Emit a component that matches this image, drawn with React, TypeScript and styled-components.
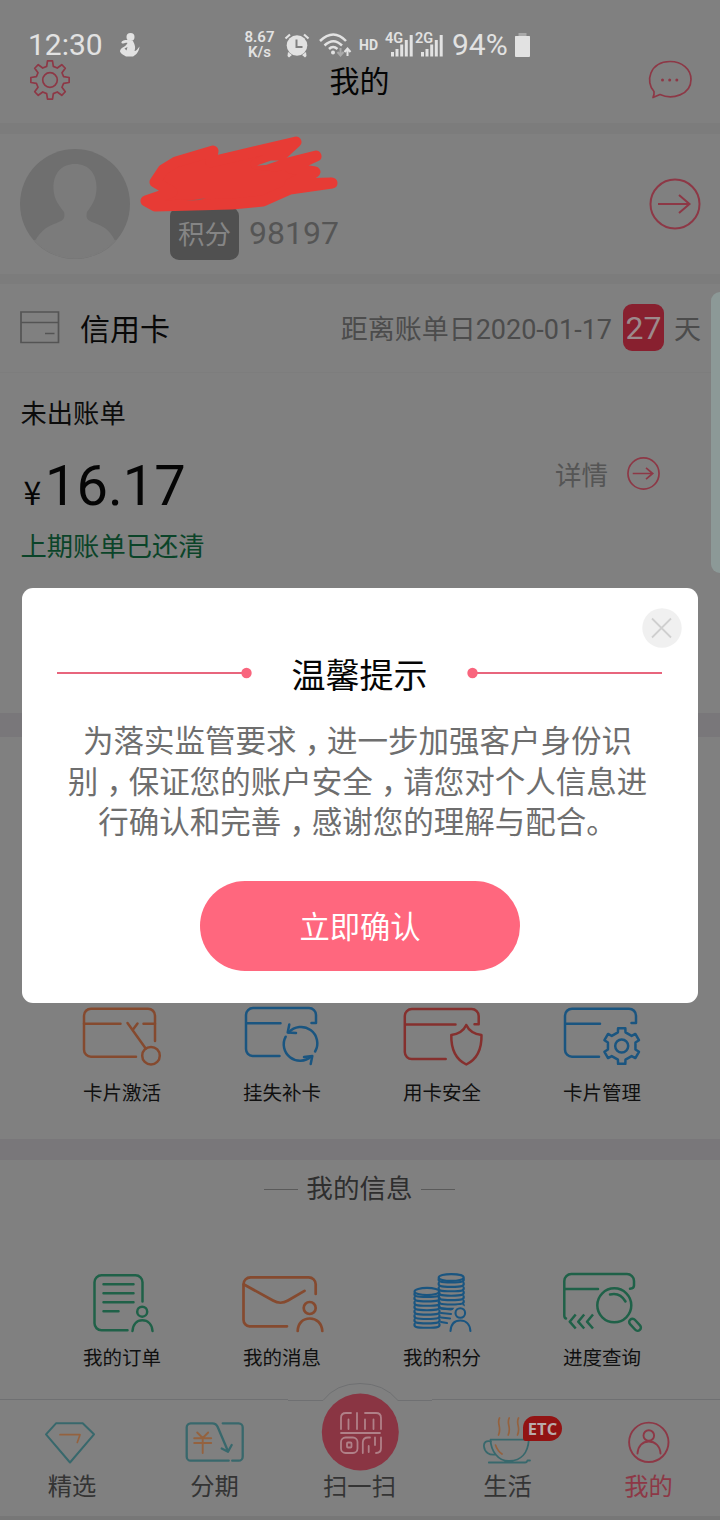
import React from "react";
import styled, { createGlobalStyle } from "styled-components";

const c = {
  page: "#808080",
  band: "#7c7c7c",
  pink: "#8d3846",
  orange: "#854a2f",
  blue: "#1a5580",
  red: "#85302e",
  green: "#1f6148",
  teal: "#38686c",
  amber: "#94623f",
  light: "#e2e2e2",
};

const GlobalStyle = createGlobalStyle`
  * { box-sizing: border-box; }
  body {
    margin: 0;
    background: ${c.page};
    font-family: Roboto, "Noto Sans CJK SC", sans-serif;
  }
  svg { display: block; flex: none; }
`;

const Page = styled.div`
  position: relative;
  display: flex;
  flex-direction: column;
  width: 720px;
  height: 1520px;
  overflow: hidden;
  background: ${c.page};
  white-space: nowrap;
`;

/* ---------- status bar ---------- */

const StatusBar = styled.div`
  display: flex;
  align-items: center;
  height: 60px;
  padding: 30px 0 0 27px;
  color: ${c.light};
`;

const Clock = styled.span`
  width: 92px;
  padding-left: 1px;
  font-size: 30px;
  line-height: 30px;
`;

const StatusRight = styled.div`
  display: flex;
  align-items: center;
  margin-left: 104px;
`;

const NetSpeed = styled.div`
  width: 31px;
  margin: -1px 9px 0 0;
  font-size: 15px;
  font-weight: 600;
  line-height: 14.5px;
  text-align: center;
`;

const HdMark = styled.span`
  width: 26px;
  margin-left: 7px;
  font-size: 14px;
  font-weight: 700;
  line-height: 26px;
`;

const SignalBox = styled.div`
  position: relative;
  width: 30px;
  height: 26px;
`;

const SignalLabel = styled.span`
  position: absolute;
  left: 0;
  top: 0;
  font-size: 14.5px;
  font-weight: 600;
  line-height: 14px;
`;

const Percent = styled.span`
  width: 62px;
  margin-left: 7px;
  font-size: 30px;
  line-height: 30px;
`;

/* ---------- header ---------- */

const Header = styled.header`
  display: flex;
  justify-content: space-between;
  align-items: flex-start;
  height: 63px;
  padding: 0 28px 0 29px;
`;

const Title = styled.h1`
  margin: 0;
  font-size: 30px;
  font-weight: 400;
  line-height: 44px;
  color: #050505;
`;

const Band = styled.div<{ $h: number; $tint?: string }>`
  flex: none;
  height: ${(p) => p.$h}px;
  background: ${(p) => p.$tint ?? c.band};
`;

/* ---------- profile ---------- */

const Profile = styled.section`
  position: relative;
  display: flex;
  align-items: center;
  height: 140px;
  padding: 0 19px 0 20px;
`;

const Points = styled.div`
  display: flex;
  align-items: center;
  flex: 1;
  margin: 58px 0 0 40px;
`;

const PointsTag = styled.span`
  width: 69px;
  height: 53px;
  border-radius: 9px;
  background: #505050;
  color: #858585;
  font-size: 26.5px;
  line-height: 55px;
  text-align: center;
`;

const PointsValue = styled.span`
  margin-left: 10px;
  font-size: 32px;
  line-height: 48px;
  color: #555;
`;

const Scribble = styled.svg`
  position: absolute;
  left: 138px;
  top: 0;
`;

/* ---------- credit card ---------- */

const CardHead = styled.div`
  display: flex;
  align-items: center;
  height: 89px;
  padding: 0 20px;
  border-bottom: 1px solid #7d7d7d;
`;

const CardName = styled.span`
  flex: 1;
  margin-left: 20px;
  padding-top: 3px;
  font-size: 30px;
  line-height: 40px;
  color: #080808;
`;

const DueText = styled.span`
  padding-top: 4px;
  font-size: 27px;
  line-height: 40px;
  color: #4c4c4c;
`;

const DayBadge = styled.span`
  width: 41px;
  height: 47px;
  margin: -1px 10px 0 11px;
  border-radius: 9px;
  background: #88202f;
  color: #9c8a8c;
  font-size: 32px;
  line-height: 49px;
  text-align: center;
`;

const Due = styled.div`
  display: flex;
  align-items: center;
  margin-right: -1px;
`;

const Bill = styled.section`
  display: flex;
  justify-content: space-between;
  height: 340px;
  padding: 21px 60px 0 20.5px;
`;

const BillText = styled.p<{ $paid?: boolean }>`
  margin: 0;
  font-size: 26.3px;
  line-height: 40px;
  color: ${(p) => (p.$paid ? "#0b4429" : "#0c0c0c")};
`;

const Amount = styled.div`
  display: flex;
  align-items: baseline;
  height: 93px;
  line-height: 105px;
  color: #050505;
  font-size: 56px;
`;

const Yen = styled.span`
  width: 24.5px;
  padding-left: 3px;
  font-family: "Noto Sans CJK SC", sans-serif;
  font-size: 32px;
`;

const Detail = styled.div`
  display: flex;
  align-items: center;
  gap: 19px;
  height: 40px;
  margin-top: 59px;
  color: #555;
  font-size: 26.5px;
`;

/* ---------- shortcut grids ---------- */

const Shortcuts = styled.section<{ $h: number; $top: number }>`
  display: grid;
  grid-template-columns: repeat(4, 160px);
  align-content: start;
  height: ${(p) => p.$h}px;
  padding: ${(p) => p.$top}px 0 0 42px;
`;

const Shortcut = styled.div`
  display: flex;
  flex-direction: column;
  align-items: center;
  font-size: 19.5px;
  line-height: 28px;
  color: #101010;
`;

const ShortcutLabel = styled.span`
  margin-top: 11px;
`;

const SectionTitle = styled.div`
  display: flex;
  align-items: center;
  justify-content: center;
  gap: 8px;
  height: 57px;
  padding: 0 1px 4px 0;
  color: #2e2e2e;
  font-size: 26.6px;
`;

const Rule = styled.i`
  width: 34px;
  height: 1px;
  margin-top: 5px;
  background: #5a5a5a;
`;

/* ---------- tab bar ---------- */

const TabBar = styled.nav`
  position: relative;
  display: grid;
  grid-template-columns: 144px 141px 149px 147px 135px;
  height: 117px;
  border-top: 1px solid #6f7072;
`;

const Tab = styled.div<{ $active?: boolean }>`
  position: relative;
  display: flex;
  flex-direction: column;
  align-items: center;
  padding-top: 15px;
  font-size: 24.3px;
  line-height: 36px;
  color: ${(p) => (p.$active ? "#8d3846" : "#343434")};
`;

const TabLabel = styled.span`
  margin-top: 2px;
`;

const ScanTab = styled(Tab)`
  padding-top: 0;
  margin-top: -18px;
`;

const ScanLabel = styled.span`
  margin-top: -3px;
`;

const EtcBadge = styled.span`
  position: absolute;
  left: 89px;
  top: 16px;
  width: 39px;
  height: 25px;
  border-radius: 12px 13px 13px 3px;
  background: #921313;
  color: #b9aaaa;
  font-family: "Open Sans", sans-serif;
  font-size: 16.5px;
  font-weight: 700;
  line-height: 26px;
  text-align: center;
`;

/* ---------- overlays ---------- */

const EdgeHandle = styled.div`
  position: absolute;
  right: 0;
  top: 292px;
  width: 9px;
  height: 281px;
  border-radius: 9px 0 0 9px;
  background: #8c9997;
`;

const Overlay = styled.div`
  position: absolute;
  inset: 0;
  padding: 588px 22px 0;
`;

const Dialog = styled.div`
  position: relative;
  display: flex;
  flex-direction: column;
  align-items: center;
  height: 415px;
  padding: 61px 1px 0 0;
  border-radius: 11px;
  background: #fff;
`;

const Close = styled.svg`
  position: absolute;
  right: 16px;
  top: 20px;
`;

const DialogHead = styled.div`
  display: flex;
  align-items: center;
  justify-content: space-between;
  width: 605px;
  height: 48px;
`;

const DialogTitle = styled.h2`
  margin: 5px 0 0;
  font-size: 34px;
  font-weight: 400;
  line-height: 48px;
  color: #050505;
`;

const Message = styled.div`
  margin-top: 25px;
  padding-right: 4px;
  font-size: 30.5px;
  line-height: 40.5px;
  color: #6e6e6e;
  text-align: center;
`;

const Comma = styled.span`
  display: inline-block;
  width: 1em;
  padding-left: 0.27em;
  text-align: left;
  font-feature-settings: "halt";
`;

const Confirm = styled.button`
  width: 320px;
  height: 90px;
  margin-top: 37px;
  padding: 3px 0 0 1px;
  border: 0;
  border-radius: 45px;
  background: #ff677e;
  color: #fff;
  font-family: inherit;
  font-size: 30.3px;
  line-height: 87px;
`;

/* ---------- drawings ---------- */

function gearPath(cx: number, cy: number, teeth: number, ro: number, ri: number, tip: number, root: number) {
  const pt = (r: number, a: number) =>
    `${(cx + r * Math.sin(a)).toFixed(2)} ${(cy - r * Math.cos(a)).toFixed(2)}`;
  const parts: string[] = [];
  for (let i = 0; i < teeth; i++) {
    const a = (i * 2 * Math.PI) / teeth;
    parts.push(`${i ? "L" : "M"}${pt(ri, a - root)}`, `L${pt(ro, a - tip)}`, `L${pt(ro, a + tip)}`, `L${pt(ri, a + root)}`);
  }
  return parts.join("") + "Z";
}

const Icon = ({ color, w = 90, h = 66, sw = 2.5, children }: {
  color: string; w?: number; h?: number; sw?: number; children: React.ReactNode;
}) => (
  <svg width={w} height={h} viewBox={`0 0 ${w} ${h}`} fill="none" stroke={color} strokeWidth={sw} strokeLinecap="round" strokeLinejoin="round">
    {children}
  </svg>
);

const ArrowCircle = ({ size, sw }: { size: number; sw: number }) => (
  <svg width={size} height={size} viewBox="0 0 52 52" fill="none" stroke={c.pink} strokeWidth={sw}>
    <circle cx="26" cy="26" r="24.5" />
    <path d="M9 26H40M30 17L40.500 26L30 35" />
  </svg>
);

const Signal = ({ label }: { label: string }) => (
  <SignalBox>
    <svg width="30" height="26" viewBox="0 0 30 26" fill={c.light}>
      <path d="M6 20h3v4.500h-3zM10.500 17h3v7.500h-3zM15.200 12.500h3v12h-3zM19.800 8h3v16.500h-3zM24.700 3h3v21.500h-3z" />
    </svg>
    <SignalLabel>{label}</SignalLabel>
  </SignalBox>
);

const coinLayers = (x1: number, x2: number, y: number, n: number, step: number) =>
  Array.from({ length: n }, (_, i) => {
    const yy = y + i * step;
    return `M${x1} ${yy}c-1 3 1 4 ${(x2 - x1) / 2} 4s${(x2 - x1) / 2 + 1}-1 ${(x2 - x1) / 2}-4`;
  }).join("");

const services = [
  {
    label: "卡片激活",
    icon: (
      <Icon color={c.orange}>
        <path d="M59 53.700H14a7 7 0 0 1-7-7V12.700a7 7 0 0 1 7-7H71a7 7 0 0 1 7 7V38" />
        <path d="M7 20.700H43.500M66.500 20.700H78M50.500 20L68.700 45.500M56 26.500L60.500 20.500" />
        <circle cx="74" cy="52.700" r="8.800" />
      </Icon>
    ),
  },
  {
    label: "挂失补卡",
    icon: (
      <Icon color={c.blue}>
        <path d="M42.500 53H15.500a7 7 0 0 1-6.500-7V12a7 7 0 0 1 7-7H72a7 7 0 0 1 7 7V20H74.500M9 20.300H43.500" />
        <path d="M51.800 29.500A16.300 16.300 0 0 1 78.100 48.500M48.700 33.700A16.300 16.300 0 0 0 74 53.500" />
        <path d="M52.300 21.500L50.700 29.500L59 30M67 54L75.300 53L73.700 61" />
      </Icon>
    ),
  },
  {
    label: "用卡安全",
    icon: (
      <Icon color={c.red}>
        <path d="M48.700 56H15a7 7 0 0 1-7.200-7V13a7 7 0 0 1 7-7H74.700a7 7 0 0 1 7 7V21.300H77.500M7.700 21.500H58.500" />
        <path d="M69.300 22C66.500 28 62 31 54.300 32C54 46 58 56 69.300 61.500C80.500 56 84.800 46 84.500 32C77 31 72 28 69.300 22Z" />
      </Icon>
    ),
  },
  {
    label: "卡片管理",
    icon: (
      <Icon color={c.blue}>
        <path d="M42 53.700H15a7 7 0 0 1-7-7V12.700a7 7 0 0 1 7-7H72a7 7 0 0 1 7 7V20H74.500M8 20.700H43" />
        <path d={gearPath(64.7, 43, 6, 18.2, 14.2, 0.2, 0.27)} />
        <circle cx="64.700" cy="43" r="6.500" />
      </Icon>
    ),
  },
];

const infos = [
  {
    label: "我的订单",
    icon: (
      <Icon color={c.green}>
        <path d="M50.500 62.300H24.500a7 7 0 0 1-7-7V14.300a7 7 0 0 1 7-7H58.500a7 7 0 0 1 7 7V33.500" />
        <path d="M26.500 16.300H56.500M26.500 25.300H56.500M26.500 34.300H56.500M26.500 43.200H41.500" />
        <circle cx="65.200" cy="43.700" r="5" />
        <path d="M55.500 63C56 56 60 52.300 65.300 52.300S75 56 75.500 63" />
      </Icon>
    ),
  },
  {
    label: "我的消息",
    icon: (
      <Icon color={c.orange} sw={2.7}>
        <path d="M50 58.300H12.500a6.500 6.500 0 0 1-6-6.500V16.300a7 7 0 0 1 7-7H71.700a7 7 0 0 1 7 7V26" />
        <path d="M7 16.500L36 32.500Q43.500 37 51 32.500L67.500 22.800" />
        <circle cx="72.700" cy="40" r="6" />
        <path d="M60.700 63C61 55 66 50.500 72.800 50.500S84.700 55 85.300 63" />
      </Icon>
    ),
  },
  {
    label: "我的积分",
    icon: (
      <Icon color={c.blue} sw={2.1}>
        <ellipse cx="54.200" cy="9.500" rx="12.500" ry="3.400" />
        <path d={coinLayers(41.8, 66.6, 10.5, 7, 4.4)} />
        <ellipse cx="30" cy="23.500" rx="12.500" ry="3.600" />
        <path d={coinLayers(17.6, 42.4, 25, 8, 4.4)} />
        <path d="M44 40.500L54 41.500M44 45L54 46M44 49.500L53 50.500M44 54L50 55" />
        <circle cx="63.300" cy="45" r="8" fill={c.page} stroke="none" />
        <circle cx="63.300" cy="45" r="4.800" />
        <path d="M53.500 63C54 56 58 52.500 63.400 52.500S73 56 73.400 63" />
      </Icon>
    ),
  },
  {
    label: "进度查询",
    icon: (
      <Icon color={c.green}>
        <path d="M9 50.500Q7.300 50 7.300 47.500V13a7 7 0 0 1 7-7H70a7 7 0 0 1 7 7V17.500Q77 20.500 73 20.700M7.300 21H41" />
        <circle cx="57.300" cy="37.300" r="17" />
        <path d="M53 26.500Q63 24 68.500 33.500" />
        <rect x="71" y="53.500" width="14" height="6.500" rx="3.200" transform="rotate(47 78 56.800)" />
        <path d="M18.700 46.500L12.700 53.700L18.700 60.500M27.200 46.500L21.200 53.700L27.200 60.500M36 46.500L30 53.700L36 60.500" strokeLinecap="butt" />
      </Icon>
    ),
  },
];

const tabIcon = { w: 60, h: 52, sw: 2 };

export default function App() {
  return (
    <>
      <GlobalStyle />
      <Page>
        <StatusBar>
          <Clock>12:30</Clock>
          <svg width="21" height="26" viewBox="0 0 21 26" fill={c.light}>
            <circle cx="11.500" cy="5" r="4" />
            <path d="M9 8C5 7.500 2 9 2.500 11C5 12.500 7 10 8.500 11C7 15 1 15.500 1 19.500C2 22 5 23 7 24.500H14C16 23.500 20 20.500 20.500 14.500C18.500 17 17.500 19 15.500 19C17 15 15.500 12 14 9Z" />
            <path d="M5.500 16.500L8.500 15L7.500 18.500Z" fill={c.page} />
          </svg>
          <StatusRight>
            <NetSpeed>8.67<br />K/s</NetSpeed>
            <svg width="26" height="26" viewBox="0 0 26 26" fill={c.light}>
              <circle cx="13" cy="13.500" r="10.300" />
              <path d="M4 20L8 23L5 25.500L3.500 24ZM22 20L18 23L21 25.500L22.500 24Z" />
              <path d="M1.500 6.500L6 2.500M24.500 6.500L20 2.500" stroke={c.light} strokeWidth="2.200" />
              <path d="M12.500 7.500V15H18.500" stroke={c.page} strokeWidth="2" fill="none" />
            </svg>
            <svg width="34" height="26" viewBox="0 0 34 26" fill="none" stroke={c.light} strokeWidth="2.500" style={{ marginLeft: 8 }}>
              <path d="M2 9Q15.500-4 28 9M6.500 13.500Q15.500 5 24 13.500M11 17Q15 13 19.500 17" />
              <circle cx="15" cy="20.500" r="2" fill={c.light} stroke="none" />
              <path d="M22.500 16v7M19.500 20l3 3.500l3-3.500" stroke="#aaa" strokeWidth="2" />
              <path d="M29.500 24v-7M26.500 20l3-3.500l3 3.500" strokeWidth="2" />
            </svg>
            <HdMark>HD</HdMark>
            <Signal label="4G" />
            <Signal label="2G" />
            <Percent>94%</Percent>
            <svg width="17" height="26" viewBox="0 0 17 26" fill={c.light}>
              <path d="M4.500 1h8v3h-8z" fill="#a9a9a9" />
              <path d="M1.500 4h14q.5 0 .5.500V24q0 1-1 1H2q-1 0-1-1V4.500q0-.5.500-.5z" />
            </svg>
          </StatusRight>
        </StatusBar>

        <Header>
          <svg width="42" height="42" viewBox="0 0 42 42" fill="none" stroke={c.pink} strokeWidth="1.700" strokeLinejoin="round">
            <path d={gearPath(21, 20, 8, 19.3, 14, 0.13, 0.24)} />
            <circle cx="21" cy="20" r="7.300" />
          </svg>
          <Title>我的</Title>
          <svg width="44" height="42" viewBox="0 0 44 42" fill="none" stroke={c.pink} strokeWidth="1.700" strokeLinejoin="round">
            <path d="M6 31.500C-3 22 1.500 1.800 22 1.500C34 1.500 43 9 43 19.500C43 35 24 40 12 34.500L5 37.500Q6.500 35 6 31.500Z" />
            <g fill={c.pink} stroke="none">
              <circle cx="14.500" cy="20" r="1.500" />
              <circle cx="21.700" cy="20" r="1.500" />
              <circle cx="28.800" cy="20" r="1.500" />
            </g>
          </svg>
        </Header>
        <Band $h={11} />

        <Profile>
          <svg width="110" height="110" viewBox="0 0 110 110">
            <circle cx="55" cy="55" r="55" fill="#6f6f6f" />
            <path d="M55 15C41 15 33 25 33.500 40C34 51 39 56 44 63C46 71 41 72 34 75C26 78 20 83 15 92A55 55 0 0 0 95 92C91 83 85 78 77 75C69 72 65 71 67 63C72 56 76 51 76.500 40C77 25 69 15 55 15Z" fill="#7b7b7b" />
            <path d="M14.500 91A54.500 54.500 0 0 0 95.500 91" fill="none" stroke="#7b7b7b" strokeWidth="1.500" />
          </svg>
          <Points>
            <PointsTag>积分</PointsTag>
            <PointsValue>98197</PointsValue>
          </Points>
          <ArrowCircle size={52} sw={2} />
          <Scribble width="204" height="80" viewBox="138 134 204 80" fill="#e73b35" stroke="#e73b35" strokeWidth="11" strokeLinejoin="round" strokeLinecap="round">
            <path d="M163 170L176 162L213 151L211 162L296 142L284 153L256 164L276 166L316 156L290 168L315 172L290 184L332 183L290 189L263 201L232 204L155 206L146 201L172 192L155 182Z" />
            <path d="M257 165.500L271 160.500L279 160.500L266 165Z" fill={c.page} stroke="none" />
            <path d="M186 201L206 198L200 200Z" fill="#a05b58" stroke="none" />
          </Scribble>
        </Profile>
        <Band $h={10} />

        <CardHead>
          <svg width="40" height="34" viewBox="0 0 40 34" fill="none" stroke="#545454" strokeWidth="1.700">
            <path d="M1 1H38.500V31.500H1ZM1 11.500H38.500M25 22.500H34.500" />
          </svg>
          <CardName>信用卡</CardName>
          <Due>
            <DueText>距离账单日2020-01-17</DueText>
            <DayBadge>27</DayBadge>
            <DueText>天</DueText>
          </Due>
        </CardHead>
        <Bill>
          <div>
            <BillText>未出账单</BillText>
            <Amount><Yen>¥</Yen>16.17</Amount>
            <BillText $paid>上期账单已还清</BillText>
          </div>
          <Detail>
            详情
            <ArrowCircle size={33} sw={2.7} />
          </Detail>
        </Bill>
        <Band $h={24} $tint="#79777a" />

        <Shortcuts $h={402} $top={266}>
          {services.map((s) => (
            <Shortcut key={s.label}>
              {s.icon}
              <ShortcutLabel>{s.label}</ShortcutLabel>
            </Shortcut>
          ))}
        </Shortcuts>
        <Band $h={21} $tint="#79777a" />

        <SectionTitle><Rule />我的信息<Rule /></SectionTitle>
        <Shortcuts $h={182} $top={51}>
          {infos.map((s) => (
            <Shortcut key={s.label}>
              {s.icon}
              <ShortcutLabel>{s.label}</ShortcutLabel>
            </Shortcut>
          ))}
        </Shortcuts>

        <TabBar>
          <Tab>
            <Icon color={c.teal} {...tabIcon}>
              <path d="M14 8.300H40.700L52 19.300L28 47.500L4 19.300Z" />
              <path d="M18 19.700H38L35.300 27.500" stroke={c.amber} strokeWidth="1.700" />
            </Icon>
            <TabLabel>精选</TabLabel>
          </Tab>
          <Tab>
            <Icon color={c.teal} {...tabIcon} sw={2.3}>
              <g transform="translate(-.8 0)">
                <path d="M44.500 45.700H6.500a4 4 0 0 1-4-4V12.300a4 4 0 0 1 4-4H28Q32 8.300 33.500 12L43.500 35.500M37.500 33.500L43.800 36.700L47.500 30M38.500 8.300H54.500a4 4 0 0 1 4 4V41.700a4 4 0 0 1-4 4H48" />
                <path d="M13 17.500L18.500 23L24 17.500M10 23.300H27M10 28H27M18.500 23V38" stroke={c.amber} strokeWidth="1.900" />
              </g>
            </Icon>
            <TabLabel>分期</TabLabel>
          </Tab>
          <ScanTab>
            <svg width="144" height="90" viewBox="288 1382 144 90" fill="none">
              <path d="M288 1399h144v3h-144z" fill={c.page} />
              <path d="M288 1400.500H323Q336 1383.500 360 1383.500T398 1400.500H432" fill={c.page} stroke="#6f7072" />
              <circle cx="360.300" cy="1432" r="38.500" fill="#8a3543" />
              <g stroke="#b08088" strokeWidth="1.800" strokeLinecap="round">
                <path d="M341 1429V1418Q341 1413 346 1413H351M348.500 1419.500V1429M357 1413V1429M365 1419.500V1429M365 1413H376Q381 1413 381 1418V1429M373.500 1419.500V1429M341 1433H380" />
                <rect x="341" y="1437.500" width="16.500" height="15.500" rx="4.500" />
                <rect x="347" y="1442.500" width="4.500" height="5" rx="1" />
                <path d="M362.800 1453V1442.500Q363 1437.500 368 1437.500H370M368.700 1446V1452M375 1437.500V1445M381 1437.500V1448Q381 1453 376 1453" />
              </g>
            </svg>
            <ScanLabel>扫一扫</ScanLabel>
          </ScanTab>
          <Tab>
            <Icon color={c.teal} {...tabIcon} sw={1.8}>
              <path d="M12.500 24.700H50.800C50 38 43 45.500 31.500 46S13 36 12.500 24.700ZM13 26.500C8 25 5.500 27.500 6 31.500C6.500 37 11 40.500 17.500 39.500M10.800 47.500H47Q49 47.500 49.500 45.500H52" />
              <path d="M21.500 3C18.500 9 24 12 20.500 20M31.200 3C28.200 9 33.700 12 30.200 20M40.500 3C37.500 9 43 12 39.500 20M17.500 30Q19.500 36 24 39" stroke={c.amber} strokeWidth="1.700" />
            </Icon>
            <TabLabel>生活</TabLabel>
            <EtcBadge>ETC</EtcBadge>
          </Tab>
          <Tab $active>
            <Icon color={c.pink} {...tabIcon} sw={1.9}>
              <circle cx="29.800" cy="27.300" r="19.700" />
              <circle cx="29.800" cy="20.500" r="5.300" />
              <path d="M18.500 38.500C19 31 23.500 26.500 29.800 26.500S41 31 41.500 38.500" />
            </Icon>
            <TabLabel>我的</TabLabel>
          </Tab>
        </TabBar>
        <Band $h={4} $tint="#777" />

        <EdgeHandle />
        <Overlay>
          <Dialog>
            <Close width="40" height="40" viewBox="0 0 40 40">
              <circle cx="20" cy="20" r="19.700" fill="#f0f0f0" />
              <path d="M10 10.500L29 29.500M29 10.500L10 29.500" stroke="#cfcfcf" strokeWidth="1.800" />
            </Close>
            <DialogHead>
              <svg width="195" height="12" viewBox="0 0 195 12" fill="#f9657d">
                <path d="M0 5h190v2H0z" fill="#e8657d" />
                <circle cx="189.500" cy="6" r="5.200" />
              </svg>
              <DialogTitle>温馨提示</DialogTitle>
              <svg width="195" height="12" viewBox="0 0 195 12" fill="#f9657d">
                <path d="M5 5h190v2H5z" fill="#e8657d" />
                <circle cx="5.500" cy="6" r="5.200" />
              </svg>
            </DialogHead>
            <Message>
              <div>为落实监管要求<Comma>，</Comma>进一步加强客户身份识</div>
              <div>别<Comma>，</Comma>保证您的账户安全<Comma>，</Comma>请您对个人信息进</div>
              <div>行确认和完善<Comma>，</Comma>感谢您的理解与配合。</div>
            </Message>
            <Confirm>立即确认</Confirm>
          </Dialog>
        </Overlay>
      </Page>
    </>
  );
}
